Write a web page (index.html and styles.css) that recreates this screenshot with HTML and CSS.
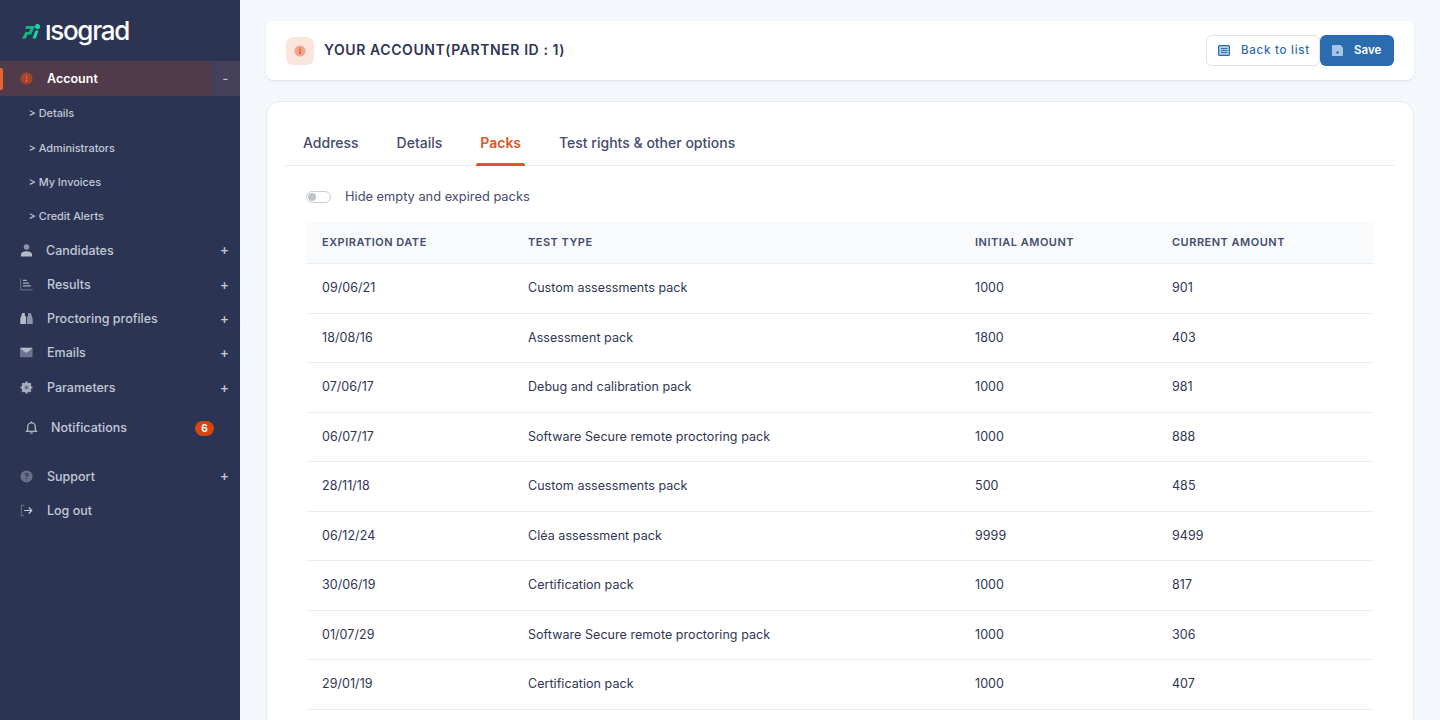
FILE: index.html
```html
<!DOCTYPE html>
<html lang="en">
<head>
    <meta charset="UTF-8">
    <meta name="viewport" content="width=device-width, initial-scale=1.0">
    <title>Isograd - Your account</title>
    <link rel="stylesheet" href="styles.css">
</head>
<body>
    <aside class="sidebar">
        <div class="logo">
            <svg class="logo-mark" width="19" height="15" viewBox="0 0 19 15">
                <circle cx="15.500" cy="2.600" r="2.500" fill="#1ed6a0"/>
                <path d="M0 14.500 L3.500 8 H7 L8.500 4.800 H3 L4.300 2 H13 L9.200 10.500 H5.500 L3.800 14.500 Z" fill="#12b886"/>
                <path d="M13.500 6.500 H16.500 L13.800 14.500 H10.500 Z" fill="#1ed6a0"/>
            </svg>
            <span class="logo-text">ısograd</span>
        </div>

        <nav class="menu">
            <div class="menu-item active">
                <span class="bar"></span>
                <svg class="icon" viewBox="0 0 14 14"><circle cx="7" cy="7" r="6.500" fill="#a2452f"/><path d="M7 3v5" stroke="#e8622c" stroke-width="1.200"/><circle cx="7" cy="9.500" r="1.200" fill="#e8622c"/></svg>
                <span class="label">Account</span>
                <span class="toggle">-</span>
            </div>
            <a class="sub-item" href="#">&gt; Details</a>
            <a class="sub-item" href="#">&gt; Administrators</a>
            <a class="sub-item" href="#">&gt; My Invoices</a>
            <a class="sub-item" href="#">&gt; Credit Alerts</a>

            <div class="menu-item">
                <svg class="icon" viewBox="0 0 14 14"><circle cx="7" cy="3.200" r="3" fill="#8d93a9"/><path d="M1 13.500v-2.300c0-2 2-3.400 6-3.400s6 1.400 6 3.400v2.300z" fill="#b5bacb"/></svg>
                <span class="label shift">Candidates</span>
                <span class="plus">+</span>
            </div>
            <div class="menu-item">
                <svg class="icon" viewBox="0 0 14 14"><path d="M.7 .5v12.300h13" fill="none" stroke="#5f6785" stroke-width="1.300"/><path d="M3.200 2.500h4M3.200 5.500h6.500M3.200 8.500h8.500" stroke="#a9afc2" stroke-width="1.400"/></svg>
                <span class="label">Results</span>
                <span class="plus">+</span>
            </div>
            <div class="menu-item">
                <svg class="icon" viewBox="0 0 14 14"><path d="M2.400 1h2.800v3l1.300 1v8H.3V7.500z" fill="#b5bacb"/><path d="M8.800 1h2.800l2.100 6.500V13H7.500V5l1.300-1z" fill="#8d93a9"/></svg>
                <span class="label">Proctoring profiles</span>
                <span class="plus">+</span>
            </div>
            <div class="menu-item">
                <svg class="icon" viewBox="0 0 14 14"><rect y="2" width="13.500" height="10" rx="1" fill="#6b7390"/><path d="M0 2.500 Q0 2 1 2 H12.500 Q13.500 2 13.500 2.500 L6.750 7.500 Z" fill="#b5bacb"/></svg>
                <span class="label">Emails</span>
                <span class="plus">+</span>
            </div>
            <div class="menu-item">
                <svg class="icon" viewBox="0 0 14 14"><circle cx="7" cy="7" r="3.700" fill="#6b7390" stroke="#a9afc2" stroke-width="3"/><path d="M7 .6v2M7 11.400v2M.6 7h2M11.400 7h2M2.500 2.500l1.400 1.400M10.100 10.100l1.400 1.400M11.500 2.500l-1.400 1.400M3.900 10.100l-1.400 1.400" stroke="#a9afc2" stroke-width="2.400"/></svg>
                <span class="label">Parameters</span>
                <span class="plus">+</span>
            </div>
            <div class="menu-item notif">
                <svg class="icon" viewBox="0 0 14 14"><path d="M3 9.500V6a4 4 0 0 1 8 0v3.500l1.400 1.500H1.600z" fill="none" stroke="#d3d6e0" stroke-width="1.100"/><path d="M5.600 13h2.800M7 .5V2" stroke="#d3d6e0" stroke-width="1.100"/></svg>
                <span class="label">Notifications</span>
                <span class="badge">6</span>
            </div>
            <div class="menu-item support">
                <svg class="icon" viewBox="0 0 14 14"><circle cx="7" cy="7" r="6.500" fill="#686f8a"/><text x="7" y="10" text-anchor="middle" class="icon-text">?</text></svg>
                <span class="label">Support</span>
                <span class="plus">+</span>
            </div>
            <div class="menu-item">
                <svg class="icon" viewBox="0 0 14 14"><path d="M4.500 1.500H1.500v11h3" fill="none" stroke="#5f6785" stroke-width="1.300"/><path d="M4.500 7h8M9.500 3.800 12.700 7 9.500 10.200" fill="none" stroke="#c3c8d6" stroke-width="1.300"/></svg>
                <span class="label">Log out</span>
            </div>
        </nav>
    </aside>

    <main class="content">
        <header class="page-head">
            <div class="head-title">
                <span class="head-icon">
                    <svg width="12" height="12" viewBox="0 0 14 14"><circle cx="7" cy="7" r="6.500" fill="#f2a58a"/><path d="M7 3v5" stroke="#d9501f" stroke-width="1.100"/><circle cx="7" cy="9.300" r="1.100" fill="#d9501f"/></svg>
                </span>
                <h1>YOUR ACCOUNT(PARTNER ID : 1)</h1>
            </div>
            <div class="head-actions">
                <button class="btn btn-outline">
                    <svg width="12" height="11" viewBox="0 0 12 11"><rect x=".6" y=".6" width="10.800" height="9.800" rx="1" fill="#b7cde4" stroke="#2b6cb0" stroke-width="1.200"/><path d="M3 3.500h6.500M3 5.500h6.500M3 7.500h6.500" stroke="#2b6cb0" stroke-width="1"/></svg>
                    Back to list
                </button>
                <button class="btn btn-primary">
                    <svg width="11" height="11" viewBox="0 0 11 11"><path d="M1 0h7.500L11 2.500V10a1 1 0 0 1-1 1H1a1 1 0 0 1-1-1V1a1 1 0 0 1 1-1z" fill="#a9c4e2"/><circle cx="5.500" cy="7.500" r="1.300" fill="#2b6cb0"/></svg>
                    Save
                </button>
            </div>
        </header>

        <section class="card">
            <div class="tabs">
                <a class="tab" href="#">Address</a>
                <a class="tab" href="#">Details</a>
                <a class="tab tab-active" href="#">Packs</a>
                <a class="tab" href="#">Test rights &amp; other options</a>
            </div>

            <div class="switch-row">
                <span class="switch"><span class="knob"></span></span>
                <span>Hide empty and expired packs</span>
            </div>

            <table class="packs">
                <thead>
                    <tr>
                        <th class="col-date">Expiration date</th>
                        <th class="col-type">Test type</th>
                        <th class="col-init">Initial amount</th>
                        <th>Current amount</th>
                    </tr>
                </thead>
                <tbody>
                    <tr><td>09/06/21</td><td>Custom assessments pack</td><td>1000</td><td>901</td></tr>
                    <tr><td>18/08/16</td><td>Assessment pack</td><td>1800</td><td>403</td></tr>
                    <tr><td>07/06/17</td><td>Debug and calibration pack</td><td>1000</td><td>981</td></tr>
                    <tr><td>06/07/17</td><td>Software Secure remote proctoring pack</td><td>1000</td><td>888</td></tr>
                    <tr><td>28/11/18</td><td>Custom assessments pack</td><td>500</td><td>485</td></tr>
                    <tr><td>06/12/24</td><td>Cléa assessment pack</td><td>9999</td><td>9499</td></tr>
                    <tr><td>30/06/19</td><td>Certification pack</td><td>1000</td><td>817</td></tr>
                    <tr><td>01/07/29</td><td>Software Secure remote proctoring pack</td><td>1000</td><td>306</td></tr>
                    <tr><td>29/01/19</td><td>Certification pack</td><td>1000</td><td>407</td></tr>
                </tbody>
            </table>
        </section>
    </main>
</body>
</html>
```

FILE: styles.css
```css
* {
    box-sizing: border-box;
}

html, body {
    height: 100%;
}

body {
    margin: 0;
    display: flex;
    height: 100vh;
    overflow: hidden;
    font-family: Inter, "Liberation Sans", sans-serif;
    background-color: #f4f7fb;
    color: #2f3654;
}

/* sidebar */
.sidebar {
    width: 240px;
    flex-shrink: 0;
    background-color: #2b3553;
    color: #c3c8d6;
}

.logo {
    height: 61px;
    padding: 0 0 0 22px;
    display: flex;
    align-items: center;
    gap: 4px;
}

.logo-mark {
    margin-top: 1px;
}

.logo-text {
    font-size: 26px;
    font-weight: 500;
    letter-spacing: -1.300px;
    color: #ffffff;
    line-height: 1;
}

.menu-item {
    position: relative;
    display: flex;
    align-items: center;
    height: 34.300px;
    padding-left: 20px;
    padding-bottom: 1px;
    font-size: 12.500px;
    font-weight: 500;
}

.icon {
    width: 13px;
    height: 13px;
    flex-shrink: 0;
}

.icon-text {
    font-size: 8px;
    font-weight: 700;
    fill: #2b3553;
}

.label {
    margin-left: 14px;
}

.label.shift {
    margin-left: 13px;
}

.plus {
    position: absolute;
    right: 11px;
    top: 9px;
    font-size: 14px;
    line-height: 16px;
    font-weight: 500;
}

.menu-item.active {
    height: 35px;
    background-color: #513b4a;
    color: #ffffff;
    font-weight: 600;
}

.bar {
    position: absolute;
    left: 0;
    top: 7px;
    width: 3px;
    height: 22px;
    background-color: #e8622c;
    border-radius: 0 2px 2px 0;
}

.toggle {
    position: absolute;
    right: 0;
    top: 0;
    bottom: 0;
    width: 29px;
    background-color: #45405a;
    color: #c3c8d6;
    display: flex;
    align-items: center;
    justify-content: center;
    font-weight: 500;
}

.sub-item {
    display: flex;
    align-items: center;
    height: 34.350px;
    padding-left: 28.500px;
    font-size: 10.900px;
    font-weight: 500;
    color: #c3c8d6;
    text-decoration: none;
}

.menu-item.notif {
    height: 34px;
    margin-top: 6px;
    padding-left: 25px;
    margin-bottom: 14.500px;
}

.notif .label {
    margin-left: 13px;
}

.badge {
    position: absolute;
    left: 195px;
    top: 10px;
    width: 19px;
    height: 15px;
    border-radius: 8px;
    background-color: #d9450f;
    color: #ffffff;
    font-size: 10px;
    font-weight: 700;
    display: flex;
    align-items: center;
    justify-content: center;
}

/* main column */
.content {
    flex-grow: 1;
    min-width: 0;
    padding: 21px 26px 0;
}

.page-head {
    height: 59px;
    background-color: #ffffff;
    border-radius: 8px;
    box-shadow: 0 1px 2px rgba(40, 50, 90, 0.12);
    padding: 0 20px;
    display: flex;
    justify-content: space-between;
    align-items: center;
}

.head-title {
    display: flex;
    align-items: center;
    gap: 10px;
}

.head-icon {
    width: 28px;
    height: 28px;
    border-radius: 7px;
    background-color: #fbe6de;
    display: flex;
    align-items: center;
    justify-content: center;
}

h1 {
    margin: 0 0 2px;
    font-size: 14px;
    font-weight: 600;
    letter-spacing: 0.58px;
    color: #2f3654;
}

.head-actions {
    display: flex;
}

.btn {
    height: 31px;
    font-family: inherit;
    font-size: 11.500px;
    font-weight: 500;
    border-radius: 6px;
    display: flex;
    align-items: center;
    padding-bottom: 2px;
    cursor: pointer;
}

.btn-outline {
    width: 114px;
    padding-left: 11px;
    gap: 11px;
    background-color: #ffffff;
    border: 1px solid #dfe3ee;
    color: #2b6cb0;
    letter-spacing: 0.75px;
}

.btn-primary {
    width: 74px;
    padding-left: 12px;
    gap: 11px;
    background-color: #2b6cb0;
    border: none;
    color: #ffffff;
    font-weight: 600;
}

.card {
    margin-top: 21px;
    background-color: #ffffff;
    border: 1px solid #e6eaf2;
    border-radius: 14px;
    padding: 19px 19px 40px 18px;
}

.tabs {
    display: flex;
    height: 45px;
    border-bottom: 1px solid #e9ecf3;
    padding-left: 18px;
    gap: 38px;
}

.tab {
    position: relative;
    padding-top: 13px;
    font-size: 14px;
    font-weight: 500;
    color: #444b6e;
    text-decoration: none;
}

.tab-active {
    color: #e0562a;
    font-weight: 600;
}

.tab-active::after {
    content: "";
    position: absolute;
    left: -4px;
    right: -4px;
    bottom: -1px;
    height: 3px;
    border-radius: 2px 2px 0 0;
    background-color: #e0562a;
}

.switch-row {
    display: flex;
    align-items: center;
    gap: 14px;
    height: 55px;
    padding: 6px 0 0 21px;
    font-size: 12.840px;
    color: #444b6e;
}

.switch {
    width: 25px;
    height: 12px;
    border: 1px solid #c9cedb;
    border-radius: 6px;
    display: flex;
    align-items: center;
    padding-left: 1px;
}

.knob {
    width: 8px;
    height: 8px;
    border-radius: 50%;
    background-color: #bfc2c9;
}

.packs {
    width: 1068px;
    margin-left: 21px;
    border-collapse: collapse;
    table-layout: fixed;
    font-size: 12.500px;
    letter-spacing: 0.05px;
}

.packs th {
    height: 42.500px;
    padding: 0 0 0 16px;
    background-color: #f9fafc;
    border-bottom: 1px solid #ebedf5;
    text-align: left;
    text-transform: uppercase;
    font-size: 11px;
    font-weight: 600;
    letter-spacing: 0.5px;
    color: #444b6e;
}

.col-date {
    width: 206px;
}

.col-type {
    width: 447px;
}

.col-init {
    width: 197px;
}

.packs td {
    height: 49.500px;
    padding: 0 0 1px 16px;
    border-bottom: 1px solid #ebedf5;
    color: #2f3654;
}
```
